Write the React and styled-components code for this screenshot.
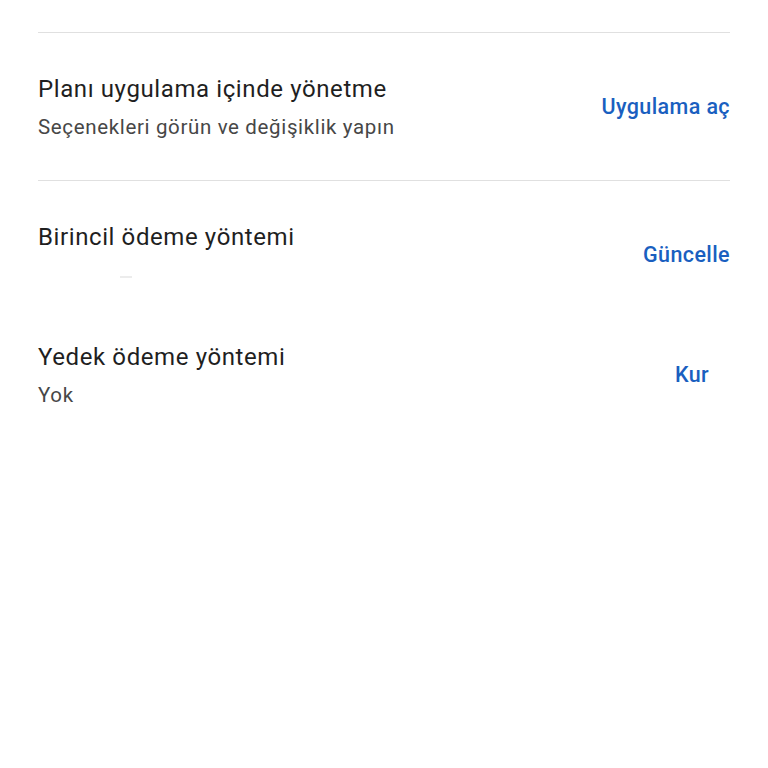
import React from "react";
import styled, { createGlobalStyle } from "styled-components";

const GlobalStyle = createGlobalStyle`
  html, body {
    margin: 0;
    padding: 0;
    background: #ffffff;
  }
  body {
    font-family: Roboto, "Noto Sans", Arial, sans-serif;
    -webkit-font-smoothing: antialiased;
  }
`;

const Page = styled.div`
  width: 768px;
  min-height: 768px;
  background: #fff;
  padding: 32px 38px 0;
  box-sizing: border-box;
`;

const Divider = styled.div`
  height: 1px;
  background: #e0e0e0;
`;

const Row = styled.div`
  display: flex;
  align-items: center;
  justify-content: space-between;
  padding-top: 37px;
  padding-bottom: ${props => props.bottom || 0}px;
`;

const TextBlock = styled.div`
  display: flex;
  flex-direction: column;
`;

const Title = styled.div`
  font-size: 24px;
  line-height: 38px;
  color: #1f1f1f;
  letter-spacing: 0.6px;
`;

const Subtitle = styled.div`
  font-size: 20.5px;
  line-height: 38px;
  min-height: 38px;
  color: #474747;
  letter-spacing: 0.65px;
`;

const Faint = styled.span`
  display: inline-block;
  width: 12px;
  height: 2px;
  margin-left: 82px;
  background: #ececec;
  vertical-align: middle;
`;

const Action = styled.button`
  border: none;
  background: none;
  padding: 0 0 3px;
  margin: 0 ${props => props.inset || 0}px 0 0;
  font-family: inherit;
  font-size: 21.5px;
  font-weight: 500;
  letter-spacing: 0.4px;
  color: #1a5fc0;
  cursor: pointer;
`;

const SettingRow = ({ title, subtitle, action, inset, bottom, faint }) => (
  <Row bottom={bottom}>
    <TextBlock>
      <Title>{title}</Title>
      <Subtitle>{faint ? <Faint /> : subtitle}</Subtitle>
    </TextBlock>
    <Action inset={inset}>{action}</Action>
  </Row>
);

export default function App() {
  return (
    <>
      <GlobalStyle />
      <Page>
        <Divider />
        <SettingRow
          title="Planı uygulama içinde yönetme"
          subtitle="Seçenekleri görün ve değişiklik yapın"
          action="Uygulama aç"
          bottom={34}
        />
        <Divider />
        <SettingRow
          title="Birincil ödeme yöntemi"
          faint
          action="Güncelle"
          bottom={7}
        />
        <SettingRow
          title="Yedek ödeme yöntemi"
          subtitle="Yok"
          action="Kur"
          inset={21}
        />
      </Page>
    </>
  );
}
